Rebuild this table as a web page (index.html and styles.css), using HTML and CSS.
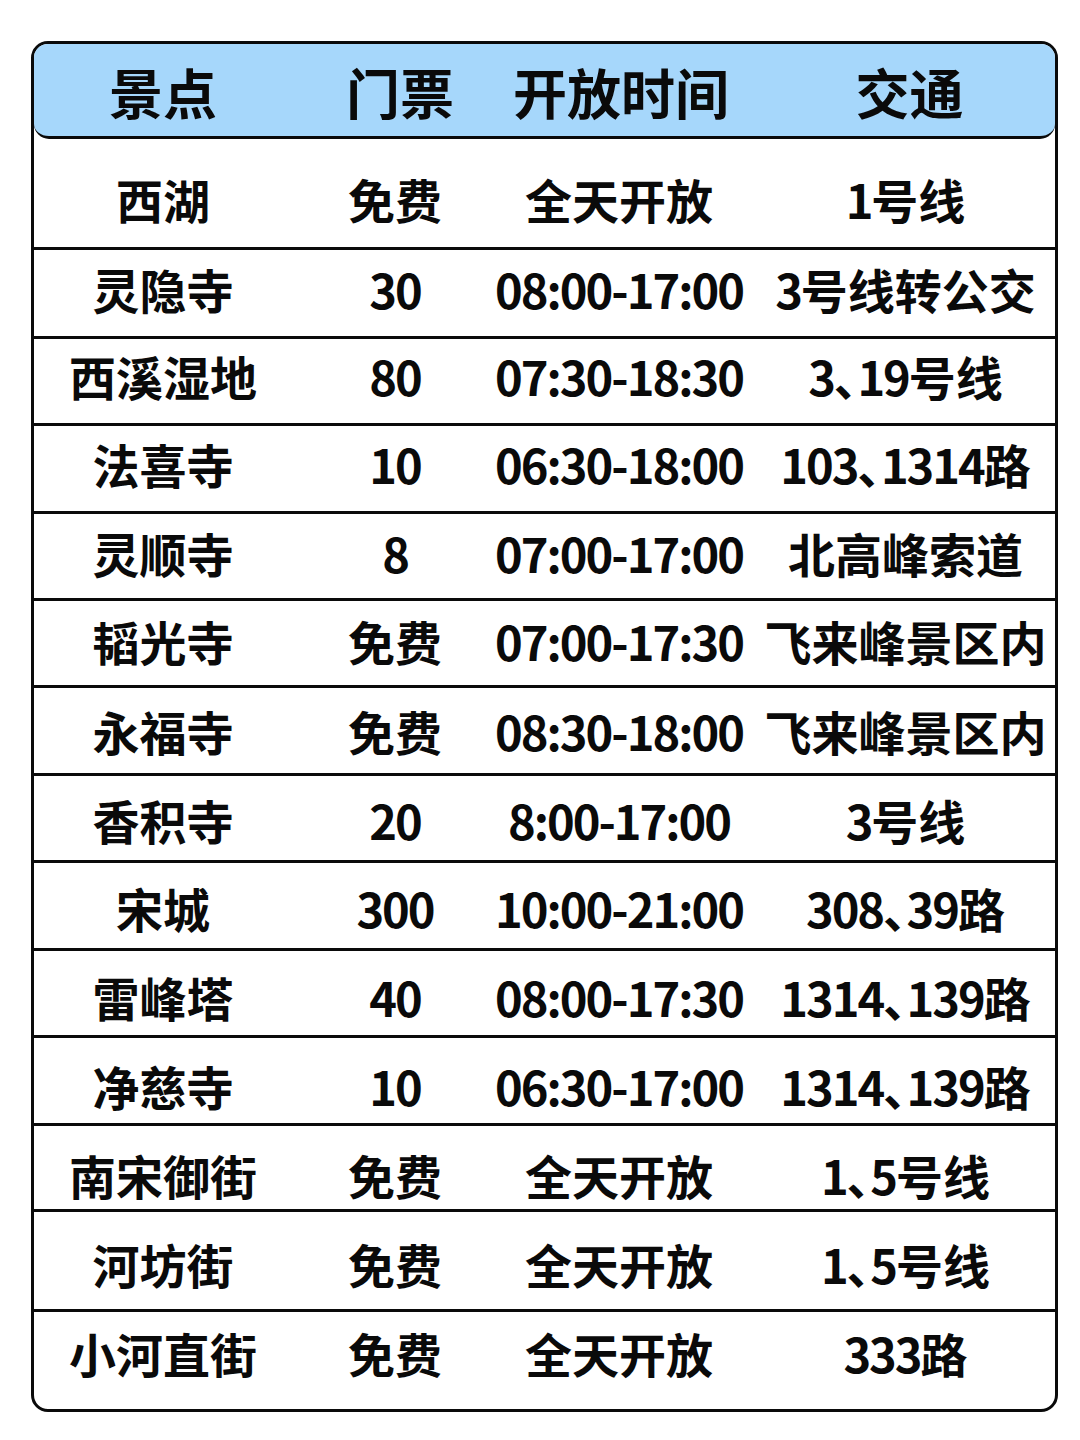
FILE: index.html
```html
<!DOCTYPE html>
<html lang="zh-CN">
<head>
<meta charset="utf-8">
<title>杭州景点</title>
<link rel="stylesheet" href="styles.css">
</head>
<body>
<div class="table">
  <div class="head">
    <div class="c c1">景点</div>
    <div class="c c2">门票</div>
    <div class="c c3">开放时间</div>
    <div class="c c4">交通</div>
  </div>
  <div class="rows">
    <div class="row"><div class="c c1">西湖</div><div class="c c2">免费</div><div class="c c3">全天开放</div><div class="c c4"><span class="num">1</span>号线</div></div>
    <div class="row"><div class="c c1">灵隐寺</div><div class="c c2"><span class="num">30</span></div><div class="c c3"><span class="num">08:00-17:00</span></div><div class="c c4"><span class="num">3</span>号线转公交</div></div>
    <div class="row"><div class="c c1">西溪湿地</div><div class="c c2"><span class="num">80</span></div><div class="c c3"><span class="num">07:30-18:30</span></div><div class="c c4"><span class="num">3</span>、<span class="num">19</span>号线</div></div>
    <div class="row"><div class="c c1">法喜寺</div><div class="c c2"><span class="num">10</span></div><div class="c c3"><span class="num">06:30-18:00</span></div><div class="c c4"><span class="num">103</span>、<span class="num">1314</span>路</div></div>
    <div class="row"><div class="c c1">灵顺寺</div><div class="c c2"><span class="num">8</span></div><div class="c c3"><span class="num">07:00-17:00</span></div><div class="c c4">北高峰索道</div></div>
    <div class="row"><div class="c c1">韬光寺</div><div class="c c2">免费</div><div class="c c3"><span class="num">07:00-17:30</span></div><div class="c c4">飞来峰景区内</div></div>
    <div class="row"><div class="c c1">永福寺</div><div class="c c2">免费</div><div class="c c3"><span class="num">08:30-18:00</span></div><div class="c c4">飞来峰景区内</div></div>
    <div class="row"><div class="c c1">香积寺</div><div class="c c2"><span class="num">20</span></div><div class="c c3"><span class="num">8:00-17:00</span></div><div class="c c4"><span class="num">3</span>号线</div></div>
    <div class="row"><div class="c c1">宋城</div><div class="c c2"><span class="num">300</span></div><div class="c c3"><span class="num">10:00-21:00</span></div><div class="c c4"><span class="num">308</span>、<span class="num">39</span>路</div></div>
    <div class="row"><div class="c c1">雷峰塔</div><div class="c c2"><span class="num">40</span></div><div class="c c3"><span class="num">08:00-17:30</span></div><div class="c c4"><span class="num">1314</span>、<span class="num">139</span>路</div></div>
    <div class="row"><div class="c c1">净慈寺</div><div class="c c2"><span class="num">10</span></div><div class="c c3"><span class="num">06:30-17:00</span></div><div class="c c4"><span class="num">1314</span>、<span class="num">139</span>路</div></div>
    <div class="row"><div class="c c1">南宋御街</div><div class="c c2">免费</div><div class="c c3">全天开放</div><div class="c c4"><span class="num">1</span>、<span class="num">5</span>号线</div></div>
    <div class="row"><div class="c c1">河坊街</div><div class="c c2">免费</div><div class="c c3">全天开放</div><div class="c c4"><span class="num">1</span>、<span class="num">5</span>号线</div></div>
    <div class="row"><div class="c c1">小河直街</div><div class="c c2">免费</div><div class="c c3">全天开放</div><div class="c c4"><span class="num">333</span>路</div></div>
  </div>
</div>
</body>
</html>
```

FILE: styles.css
```css
* { box-sizing: border-box; }
html, body { margin: 0; padding: 0; background: #ffffff; }
body {
  font-family: "Noto Sans CJK SC", "Noto Sans", sans-serif;
  font-weight: 700;
  color: #0a0a0a;
  width: 1080px;
  height: 1440px;
  padding: 41px 0 0 31px;
}
.table {
  width: 1027px;
  border: 3px solid #0a0a0a;
  border-radius: 17px;
  background: #fff;
  overflow: hidden;
}
.head, .row {
  display: grid;
  grid-template-columns: 258px 206px 242px 1fr;
  align-items: center;
}
.head {
  height: 95px;
  background: #a6d7fb;
  border-bottom: 3px solid #0a0a0a;
  border-radius: 0 0 15px 15px;
  font-size: 54px;
  line-height: 1;
  padding-top: 4px;
}
.c {
  display: flex;
  justify-content: center;
  white-space: nowrap;
}
.head .c2 { padding-left: 10px; }
.head .c3 { padding-left: 4px; }
.head .c4 { padding-left: 24px; }
.row .c4 { padding-left: 16px; }
.row {
  font-size: 47px;
  line-height: 1;
  font-feature-settings: "palt";
  border-top: 3px solid #0a0a0a;
  height: 88px;
}
.num { letter-spacing: -2px; }
.row:nth-child(1) { border-top: none; height: 108px; padding-top: 10px; }
.row:nth-child(2) { height: 89px; padding-bottom: 10px; }
.row:nth-child(3) { height: 87px; padding-bottom: 12px; }
.row:nth-child(4) { height: 88px; padding-bottom: 10px; }
.row:nth-child(5) { height: 87px; padding-bottom: 8px; }
.row:nth-child(6) { height: 87px; padding-bottom: 6px; }
.row:nth-child(7) { height: 88px; padding-bottom: 1px; }
.row:nth-child(8) { height: 87px; padding-top: 2px; }
.row:nth-child(9) { height: 88px; padding-top: 3px; }
.row:nth-child(10) { height: 87px; padding-top: 6px; }
.row:nth-child(11) { height: 88px; padding-top: 9px; }
.row:nth-child(12) { height: 86px; padding-top: 13px; }
.row:nth-child(13) { height: 100px; padding-top: 5px; }
.row:nth-child(14) { height: 100px; padding-bottom: 17px; }
```
